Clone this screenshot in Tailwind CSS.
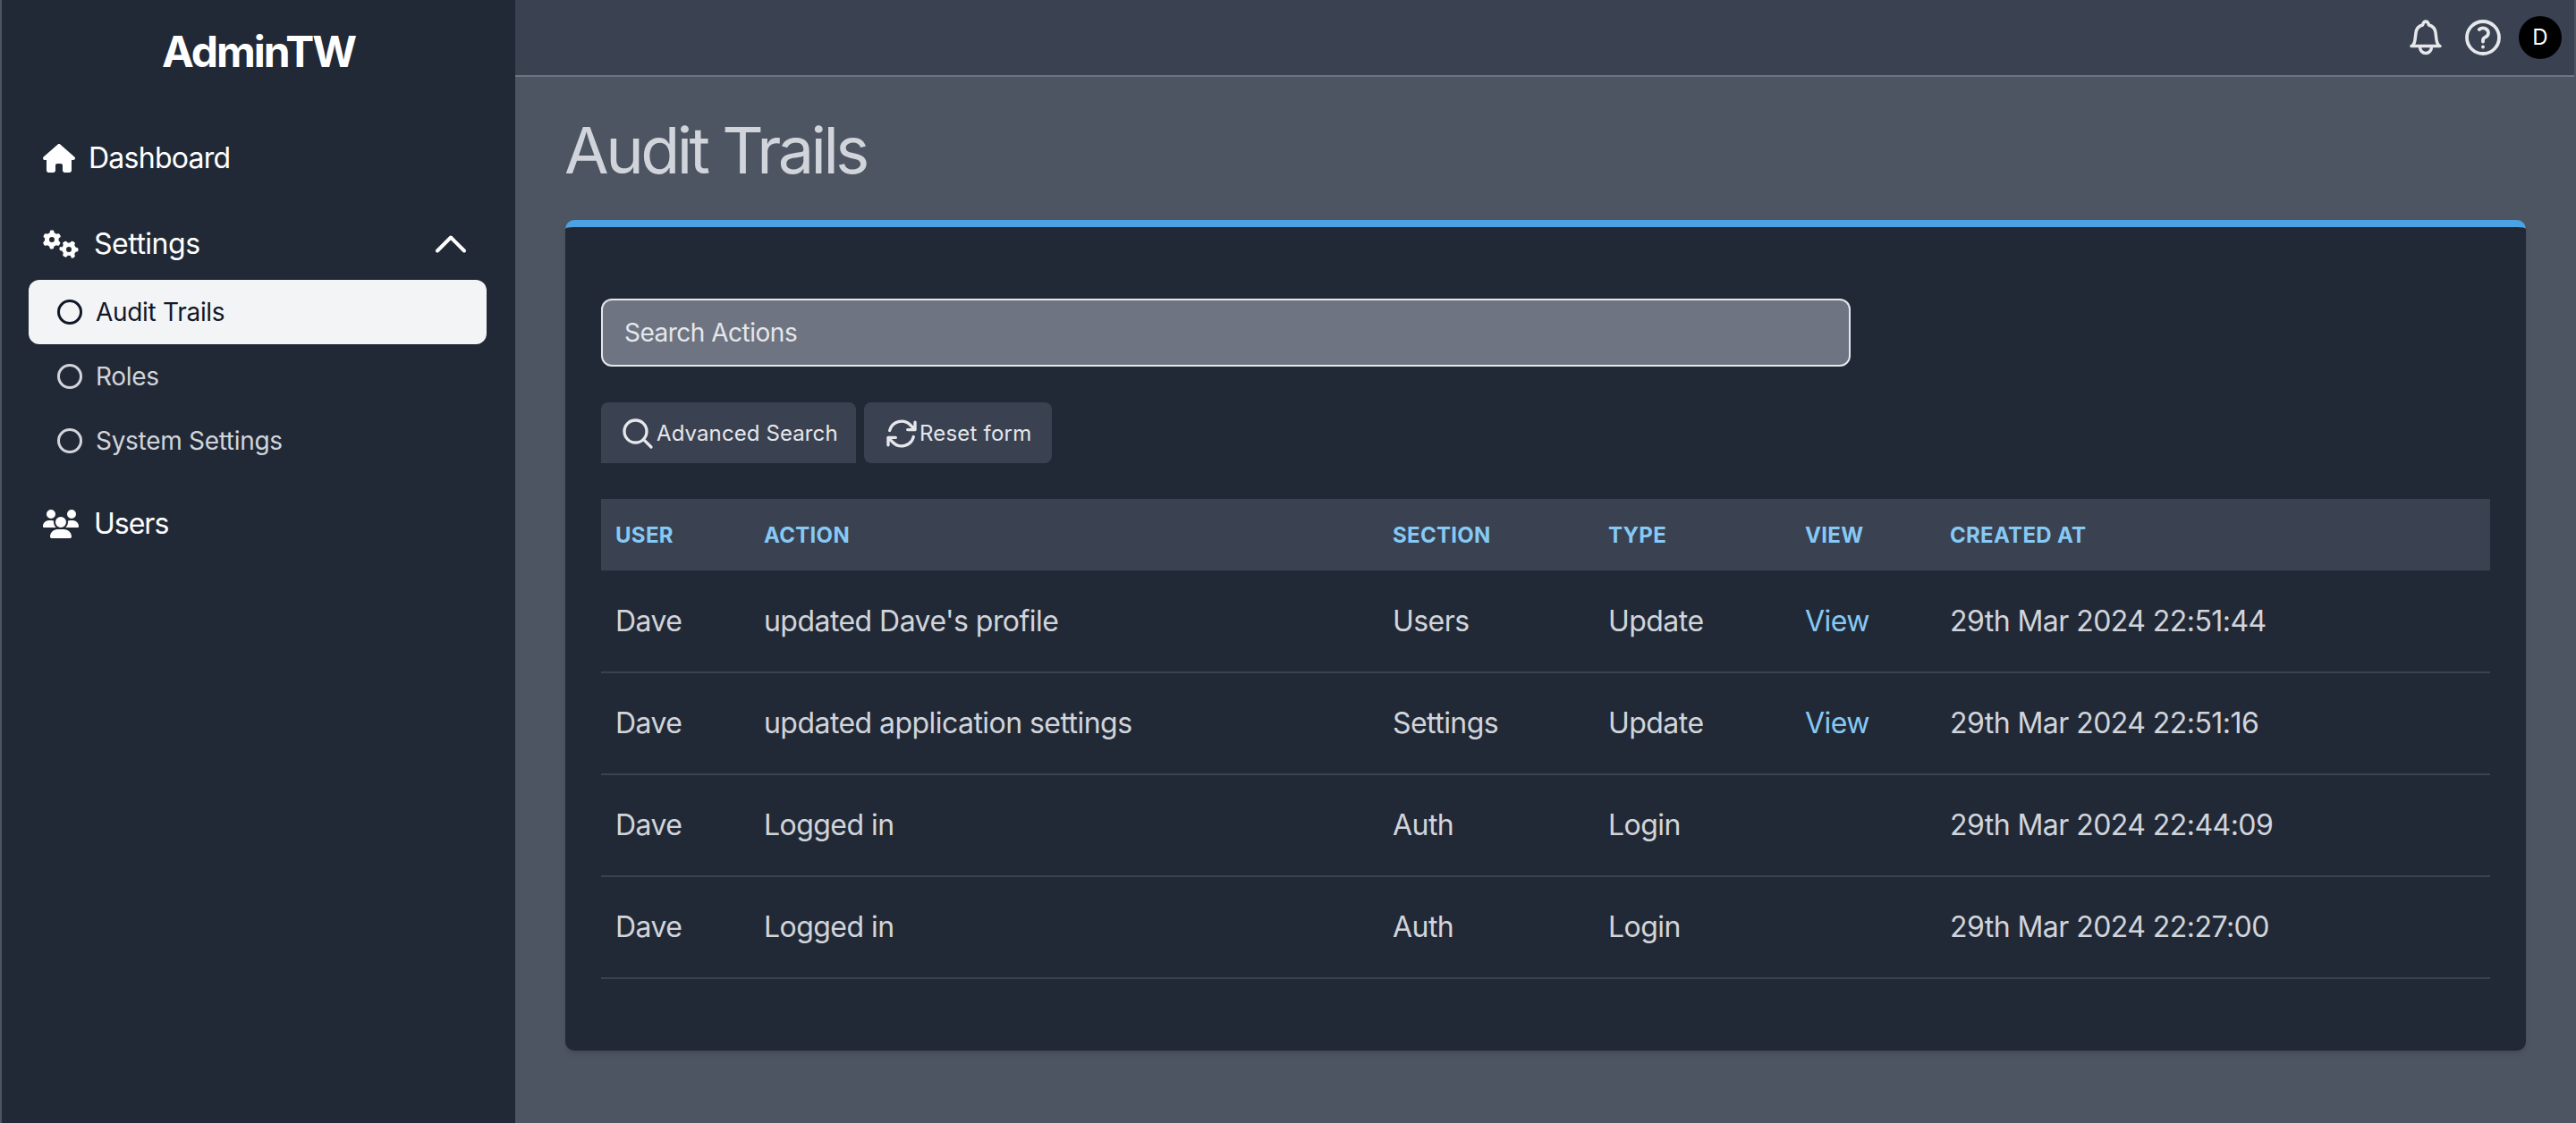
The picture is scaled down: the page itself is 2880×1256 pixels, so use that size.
<!doctype html>
<html><head><meta charset="utf-8">
<script src="https://cdn.jsdelivr.net/npm/@tailwindcss/browser@4"></script>
<title>Audit Trails</title></head>
<body class="font-[Inter,sans-serif] [font-weight:375] bg-[#4e5562]">
<div class="flex h-[1256px] w-[2880px] overflow-hidden border-x-2 border-[#4e5562]">
  <aside class="w-[574px] shrink-0 bg-[#222936] text-white">
    <div class="h-[116px] pt-[28px] text-center text-[48px] leading-[60px] font-bold tracking-[-2px]">AdminTW</div>
    <nav class="flex flex-col">
      <a class="flex items-center h-[64px] mt-[29px] pl-[46px] text-[32px] tracking-[-0.75px]">
        <svg class="w-[36px] h-[32px] mr-[15px]" viewBox="0 0 576 512" fill="currentColor"><path d="M575.8 255.5c0 18-15 32.1-32 32.1h-32l.7 160.2c0 2.7-.2 5.4-.5 8.1V472c0 22.1-17.9 40-40 40H456c-1.1 0-2.2 0-3.3-.1c-1.4 .1-2.8 .1-4.2 .1H416 392c-22.1 0-40-17.9-40-40V448 384c0-17.7-14.3-32-32-32H256c-17.7 0-32 14.3-32 32v64 24c0 22.1-17.9 40-40 40H160 128.1c-1.5 0-3-.1-4.5-.2c-1.2 .1-2.4 .2-3.6 .2H104c-22.1 0-40-17.9-40-40V360c0-.9 0-1.9 .1-2.8V287.6H32c-18 0-32-14-32-32.1c0-9 3-17 10-24L266.4 8c7-7 15-8 22-8s15 2 21 7L564.8 231.5c8 7 12 15 11 24z"/></svg>
        Dashboard</a>
      <a class="flex items-center h-[64px] mt-[32px] pl-[46px] pr-[48px] text-[32px] tracking-[-0.5px]">
        <svg class="w-[40px] h-[32px] mr-[17px]" viewBox="0 0 640 512" fill="currentColor"><path d="M308.5 135.3c7.1-6.3 9.9-16.2 6.2-25c-2.3-5.3-4.8-10.5-7.6-15.5L304 89.4c-3-5-6.3-9.9-9.8-14.6c-5.7-7.6-15.7-10.1-24.7-7.1l-28.2 9.3c-10.7-8.8-23-16-36.2-20.9L198 27.2c-1.9-9.3-9.1-16.7-18.5-17.8C173.9 8.7 168.2 8 162.4 8h-.7c-5.8 0-11.5 .7-17.1 1.4c-9.4 1.1-16.6 8.6-18.5 17.8L120 56.2c-13.2 5-25.5 12.1-36.2 20.9L55.5 67.8c-9-3-19-.5-24.7 7.1c-3.5 4.7-6.8 9.6-9.9 14.6l-3 5.3c-2.8 5-5.3 10.2-7.6 15.6c-3.7 8.7-.9 18.6 6.2 25l22.2 19.8C32.6 161.9 32 168.9 32 176s.6 14.1 1.7 20.9L11.5 216.7c-7.1 6.3-9.9 16.2-6.2 25c2.3 5.3 4.8 10.5 7.6 15.6l3 5.2c3 5.1 6.3 9.9 9.9 14.6c5.7 7.6 15.7 10.1 24.7 7.1l28.2-9.3c10.7 8.8 23 16 36.2 20.8l6.1 29.1c1.9 9.3 9.1 16.7 18.5 17.8c5.7 .7 11.4 1 17.2 1.1h.7c5.8 0 11.5-.4 17.1-1.1c9.4-1.1 16.6-8.6 18.5-17.8l6.1-29.1c13.2-5 25.5-12 36.2-20.8l28.2 9.3c9 3 19 .5 24.7-7.1c3.5-4.7 6.8-9.5 9.8-14.6l3.1-5.4c2.8-5 5.3-10.2 7.6-15.5c3.7-8.7 .9-18.6-6.2-25l-22.2-19.8c1.1-6.8 1.7-13.8 1.7-20.9s-.6-14.1-1.7-20.9l22.2-19.8zM112 176a48 48 0 1 1 96 0 48 48 0 1 1 -96 0zM504.7 500.5c6.3 7.1 16.2 9.9 25 6.2c5.3-2.3 10.5-4.8 15.5-7.6l5.4-3.1c5-3 9.9-6.3 14.6-9.8c7.6-5.7 10.1-15.7 7.1-24.7l-9.3-28.2c8.8-10.7 16-23 20.9-36.2l29.1-6.1c9.3-1.9 16.7-9.1 17.8-18.5c.7-5.7 1.1-11.5 1.1-17.3s-.4-11.6-1.1-17.3c-1.1-9.4-8.6-16.6-17.8-18.5l-29.1-6.1c-5-13.2-12.1-25.5-20.9-36.2l9.3-28.2c3-9 .5-19-7.1-24.7c-4.7-3.5-9.6-6.8-14.6-9.9l-5.3-3c-5-2.8-10.2-5.3-15.6-7.6c-8.7-3.7-18.6-.9-25 6.2l-19.8 22.2c-6.8-1.1-13.8-1.7-20.9-1.7s-14.1 .6-20.9 1.7l-19.8-22.2c-6.3-7.1-16.2-9.9-25-6.2c-5.3 2.3-10.5 4.8-15.6 7.6l-5.2 3c-5.1 3-9.9 6.3-14.6 9.9c-7.6 5.7-10.1 15.7-7.1 24.7l9.3 28.2c-8.8 10.7-16 23-20.8 36.2L315.5 302c-9.3 1.9-16.7 9.1-17.8 18.5c-.7 5.7-1 11.5-1 17.3s.4 11.6 1.1 17.3c1.1 9.4 8.6 16.6 17.8 18.5l29.1 6.1c5 13.2 12 25.5 20.8 36.2l-9.3 28.2c-3 9-.5 19 7.1 24.7c4.7 3.5 9.5 6.8 14.6 9.8l5.4 3.1c5 2.8 10.2 5.3 15.5 7.6c8.7 3.7 18.6 .9 25-6.2l19.8-22.2c6.8 1.1 13.8 1.7 20.9 1.7s14.1-.6 20.9-1.7l19.8 22.2zM464 304a48 48 0 1 1 0 96 48 48 0 1 1 0-96z"/></svg>
        <span class="flex-1">Settings</span>
        <svg class="w-[48px] h-[48px]" viewBox="0 0 24 24" fill="none" stroke="currentColor" stroke-width="2" stroke-linecap="round" stroke-linejoin="round"><path d="m4.500 15.750 7.500-7.500 7.500 7.500"/></svg>
      </a>
      <div class="flex flex-col mt-[8px] pl-[30px] pr-[32px] text-[28px] tracking-[-0.3px] text-[#d1d5db]">
        <a class="flex items-center h-[72px] rounded-[12px] bg-[#f3f4f6] text-[#111827] pl-[32px]"><span class="w-[28px] h-[28px] rounded-full border-[3px] border-[#111827] mr-[15px]"></span>Audit Trails</a>
        <a class="flex items-center h-[72px] pl-[32px]"><span class="w-[28px] h-[28px] rounded-full border-[3px] border-[#d1d5db] mr-[15px]"></span>Roles</a>
        <a class="flex items-center h-[72px] pl-[32px]"><span class="w-[28px] h-[28px] rounded-full border-[3px] border-[#d1d5db] mr-[15px]"></span>System Settings</a>
      </div>
      <a class="flex items-center h-[64px] mt-[25px] pl-[46px] text-[32px] tracking-[-1px]">
        <svg class="w-[40px] h-[32px] mr-[17px]" viewBox="0 0 640 512" fill="currentColor"><path d="M144 0a80 80 0 1 1 0 160A80 80 0 1 1 144 0zM512 0a80 80 0 1 1 0 160A80 80 0 1 1 512 0zM0 298.7C0 239.8 47.8 192 106.7 192h42.7c15.9 0 31 3.5 44.6 9.7c-1.3 7.2-1.9 14.7-1.9 22.3c0 38.2 16.8 72.5 43.3 96c-.2 0-.4 0-.7 0H21.3C9.6 320 0 310.4 0 298.7zM405.3 320c-.2 0-.4 0-.7 0c26.6-23.5 43.3-57.8 43.3-96c0-7.6-.7-15-1.9-22.3c13.6-6.3 28.7-9.7 44.6-9.7h42.7C592.2 192 640 239.8 640 298.7c0 11.8-9.6 21.3-21.3 21.3H405.3zM224 224a96 96 0 1 1 192 0 96 96 0 1 1 -192 0zM128 485.3C128 411.7 187.7 352 261.3 352H378.7C452.3 352 512 411.7 512 485.3c0 14.7-11.9 26.7-26.7 26.7H154.7c-14.7 0-26.7-11.9-26.7-26.7z"/></svg>
        Users</a>
    </nav>
  </aside>
  <div class="flex-1 flex flex-col min-w-0">
    <header class="h-[86px] shrink-0 bg-[#3a4151] border-b-2 border-[#6e7482] flex items-center justify-end pr-[14px] text-[#e5e7eb]">
      <svg class="w-[36px] h-[40px]" viewBox="0 0 36 40" fill="none" stroke="currentColor" stroke-width="3.500" stroke-linecap="round" stroke-linejoin="round"><path d="M2 29.500h32c-2.500-1-3.500-3.500-4-7l-1-8c-.5-4-3.500-7.500-7.500-8.500-.5-2-1.800-4-3.500-4s-3 2-3.500 4c-4 1-7 4.500-7.500 8.500l-1 8c-.5 3.500-1.500 6-4 7Z"/><path d="M11.500 30.500a6.500 7 0 0 0 13 0"/></svg>
      <svg class="w-[48px] h-[48px] ml-[22px]" viewBox="0 0 24 24" fill="none" stroke="currentColor" stroke-width="1.900" stroke-linecap="round" stroke-linejoin="round"><path d="M9.879 7.519c1.171-1.025 3.071-1.025 4.242 0 1.172 1.025 1.172 2.687 0 3.712-.203.179-.43.326-.67.442-.745.361-1.45.999-1.45 1.827v.75M21 12a9 9 0 1 1-18 0 9 9 0 0 1 18 0Zm-9 5.250h.008v.008H12v-.008Z"/></svg>
      <div class="w-[48px] h-[48px] ml-[16px] rounded-full bg-black text-white text-[24px] flex items-center justify-center">D</div>
    </header>
    <main class="flex-1 pl-[56px] pr-[54px]">
      <h1 class="h-[160px] flex items-center text-[72px] leading-none tracking-[-3.55px] text-[#d1d5db] pt-[4px] -ml-[1px]">Audit Trails</h1>
      <section class="rounded-[10px] border-t-[8px] border-[#4ba3e3] bg-[#222936] px-[40px] pt-[80px] pb-[80px] shadow-md">
        <input class="block w-[1397px] h-[76px] rounded-[12px] border-2 border-[#e5e7eb] bg-[#6e7482] px-[24px] text-[28px] tracking-[-0.5px] text-[#e5e7eb] placeholder:text-[#e5e7eb]" placeholder="Search Actions">
        <div class="flex gap-[9px] mt-[40px]">
          <button class="h-[68px] w-[285px] flex items-center pl-[21px] gap-[1px] pt-[1px] rounded-t-[8px] bg-[#3a4151] text-[24px] tracking-[0.1px] text-[#e5e7eb]">
            <svg class="w-[40px] h-[40px] shrink-0" viewBox="0 0 24 24" fill="none" stroke="currentColor" stroke-width="2" stroke-linecap="round" stroke-linejoin="round"><path d="m21 21-5.197-5.197m0 0A7.5 7.5 0 1 0 5.196 5.196a7.5 7.5 0 0 0 10.607 10.607Z"/></svg>
            Advanced Search</button>
          <button class="h-[68px] w-[210px] flex items-center pl-[22px] pt-[1px] rounded-[8px] bg-[#3a4151] text-[24px] tracking-[0.2px] text-[#e5e7eb]">
            <svg class="w-[40px] h-[40px] shrink-0" viewBox="0 0 24 24" fill="none" stroke="currentColor" stroke-width="2" stroke-linecap="round" stroke-linejoin="round"><path d="M16.023 9.348h4.992v-.001M2.985 19.644v-4.992m0 0h4.992m-4.993 0 3.181 3.183a8.25 8.25 0 0 0 13.803-3.7M4.031 9.865a8.25 8.25 0 0 1 13.803-3.7l3.181 3.182m0-4.991v4.99"/></svg>
            Reset form</button>
        </div>
        <table class="mt-[40px] w-[2112px] table-fixed text-left text-[32px] tracking-[-0.55px] text-[#d1d5db]">
          <colgroup><col class="w-[166px]"><col class="w-[703px]"><col class="w-[241px]"><col class="w-[220px]"><col class="w-[162px]"><col></colgroup>
          <thead class="bg-[#3a4151] text-[24px] font-bold uppercase tracking-[0.3px] text-[#86c9f5]">
            <tr class="h-[80px]"><th class="pl-[16px] pt-[2px]">User</th><th class="pl-[16px] pt-[2px]">Action</th><th class="pl-[16px] pt-[2px]">Section</th><th class="pl-[16px] pt-[2px]">Type</th><th class="pl-[16px] pt-[2px]">View</th><th class="pl-[16px] pt-[2px]">Created At</th></tr>
          </thead>
          <tbody>
            <tr class="h-[114px] border-b-2 border-[#3a4151]"><td class="pl-[16px]">Dave</td><td class="pl-[16px]">updated Dave's profile</td><td class="pl-[16px]">Users</td><td class="pl-[16px]">Update</td><td class="pl-[16px] text-[#86c9f5]">View</td><td class="pl-[16px]">29th Mar 2024 22:51:44</td></tr>
            <tr class="h-[114px] border-b-2 border-[#3a4151]"><td class="pl-[16px]">Dave</td><td class="pl-[16px]">updated application settings</td><td class="pl-[16px]">Settings</td><td class="pl-[16px]">Update</td><td class="pl-[16px] text-[#86c9f5]">View</td><td class="pl-[16px]">29th Mar 2024 22:51:16</td></tr>
            <tr class="h-[114px] border-b-2 border-[#3a4151]"><td class="pl-[16px]">Dave</td><td class="pl-[16px]">Logged in</td><td class="pl-[16px]">Auth</td><td class="pl-[16px]">Login</td><td class="pl-[16px]"></td><td class="pl-[16px]">29th Mar 2024 22:44:09</td></tr>
            <tr class="h-[114px] border-b-2 border-[#3a4151]"><td class="pl-[16px]">Dave</td><td class="pl-[16px]">Logged in</td><td class="pl-[16px]">Auth</td><td class="pl-[16px]">Login</td><td class="pl-[16px]"></td><td class="pl-[16px]">29th Mar 2024 22:27:00</td></tr>
          </tbody>
        </table>
      </section>
    </main>
  </div>
</div>
</body></html>
